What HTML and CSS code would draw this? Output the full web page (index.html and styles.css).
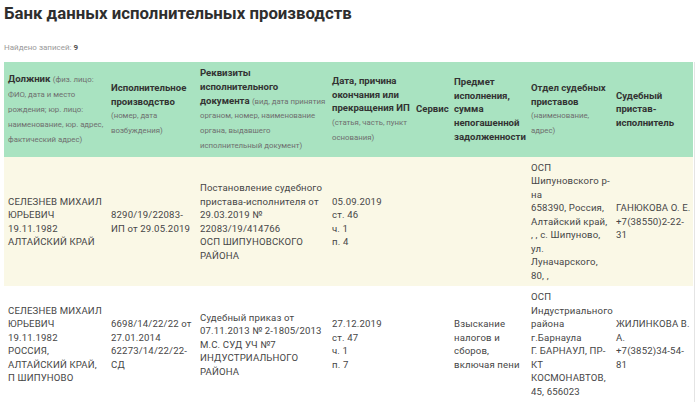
FILE: index.html
```html
<!DOCTYPE html>
<html lang="ru">
<head>
<meta charset="utf-8">
<title>Банк данных исполнительных производств</title>
<link rel="stylesheet" href="styles.css">
</head>
<body>
<h1 class="title">Банк данных исполнительных производств</h1>
<p class="found">Найдено записей: <b>9</b></p>
<div class="table-wrap">
<table class="results">
<colgroup>
<col class="c1"><col class="c2"><col class="c3"><col class="c4"><col class="c5"><col class="c6"><col class="c7"><col class="c8">
</colgroup>
<thead>
<tr>
<th>Должник <span class="hint">(физ. лицо:<br>ФИО, дата и место<br>рождения; юр. лицо:<br>наименование, юр. адрес,<br>фактический адрес)</span></th>
<th>Исполнительное<br>производство<br><span class="hint">(номер, дата<br>возбуждения)</span></th>
<th>Реквизиты<br>исполнительного<br>документа <span class="hint">(вид, дата принятия<br>органом, номер, наименование<br>органа, выдавшего<br>исполнительный документ)</span></th>
<th>Дата, причина<br>окончания или<br>прекращения ИП<br><span class="hint">(статья, часть, пункт<br>основания)</span></th>
<th>Сервис</th>
<th>Предмет<br>исполнения,<br>сумма<br>непогашенной<br>задолженности</th>
<th>Отдел судебных<br>приставов<br><span class="hint">(наименование,<br>адрес)</span></th>
<th>Судебный<br>пристав-<br>исполнитель</th>
</tr>
</thead>
<tbody>
<tr class="odd">
<td>СЕЛЕЗНЕВ МИХАИЛ<br>ЮРЬЕВИЧ<br>19.11.1982<br>АЛТАЙСКИЙ КРАЙ</td>
<td>8290/19/22083-<br>ИП от 29.05.2019</td>
<td>Постановление судебного<br>пристава-исполнителя от<br>29.03.2019 №<br>22083/19/414766<br>ОСП ШИПУНОВСКОГО<br>РАЙОНА</td>
<td>05.09.2019<br>ст. 46<br>ч. 1<br>п. 4</td>
<td></td>
<td></td>
<td>ОСП<br>Шипуновского р-<br>на<br>658390, Россия,<br>Алтайский край,<br>, , с. Шипуново,<br>ул.<br>Луначарского,<br>80, ,</td>
<td>ГАНЮКОВА О. Е.<br>+7(38550)2-22-<br>31</td>
</tr>
<tr class="even">
<td>СЕЛЕЗНЕВ МИХАИЛ<br>ЮРЬЕВИЧ<br>19.11.1982<br>РОССИЯ,<br>АЛТАЙСКИЙ КРАЙ,<br>П ШИПУНОВО</td>
<td>6698/14/22/22 от<br>27.01.2014<br>62273/14/22/22-<br>СД</td>
<td>Судебный приказ от<br>07.11.2013 № 2-1805/2013<br>М.С. СУД УЧ №7<br>ИНДУСТРИАЛЬНОГО<br>РАЙОНА</td>
<td>27.12.2019<br>ст. 47<br>ч. 1<br>п. 7</td>
<td></td>
<td>Взыскание<br>налогов и<br>сборов,<br>включая пени</td>
<td>ОСП<br>Индустриального<br>района<br>г.Барнаула<br>Г. БАРНАУЛ, ПР-<br>КТ<br>КОСМОНАВТОВ,<br>45, 656023</td>
<td>ЖИЛИНКОВА В.<br>А.<br>+7(3852)34-54-<br>81</td>
</tr>
</tbody>
</table>
</div>
</body>
</html>
```
FILE: styles.css
```css
html, body {
  margin: 0;
  padding: 0;
  background: #ffffff;
}
body {
  padding: 0 4px;
  font-family: Roboto, "Liberation Sans", Arial, sans-serif;
  color: #3a3a3a;
}
.title {
  margin: 0;
  padding-top: 2px;
  font-size: 16.8px;
  line-height: 22px;
  font-weight: 700;
  color: #2e2e2e;
}
.found {
  margin: 18px 0 0;
  font-size: 8px;
  line-height: 12px;
  color: #9a9a9a;
}
.found b {
  color: #555;
}
.table-wrap {
  margin-top: 8px;
  width: 690px;
  border-right: 1px solid #e4e4e4;
}
.results {
  width: 689px;
  table-layout: fixed;
  border-collapse: collapse;
  font-size: 9.6px;
  line-height: 13.5px;
}
.c1 { width: 103px; }
.c2 { width: 89px; }
.c3 { width: 132px; }
.c4 { width: 84px; }
.c5 { width: 38px; }
.c6 { width: 77px; }
.c7 { width: 85px; }
.c8 { width: 81px; }
.results thead tr {
  height: 94px;
}
.results th {
  background: #a9e3c1;
  text-align: left;
  vertical-align: middle;
  white-space: nowrap;
  font-size: 9.6px;
  line-height: 13.8px;
  font-weight: 700;
  color: #333;
  padding: 4px 0 4px 4px;
}
.results th .hint {
  font-weight: 400;
  font-size: 7.8px;
  color: #6f6f6f;
}
.results td {
  vertical-align: middle;
  white-space: nowrap;
  letter-spacing: 0.15px;
  padding: 4px 0 4px 4px;
  color: #464646;
}
.results tr.odd td {
  background: #faf8e6;
}
.results tr.even td {
  background: #ffffff;
}
```
